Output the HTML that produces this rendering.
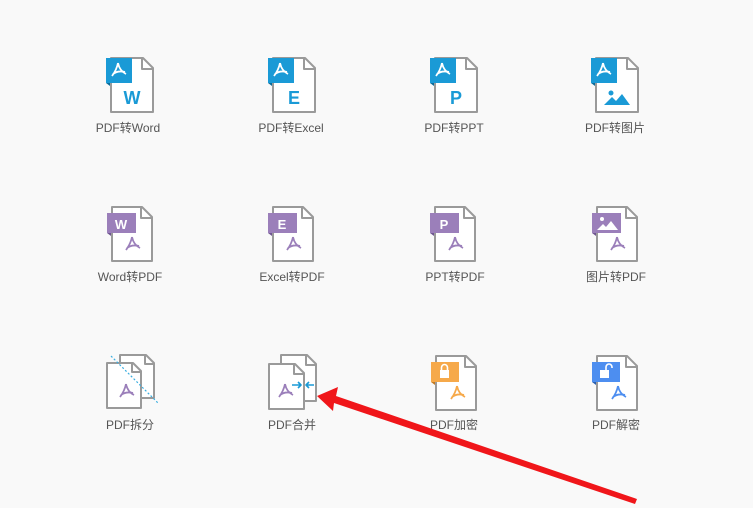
<!DOCTYPE html>
<html><head><meta charset="utf-8"><style>
html,body{margin:0;padding:0;background:#f9f9f9;width:753px;height:508px;overflow:hidden}
text{font-family:"Liberation Sans","Noto Sans CJK SC",sans-serif}
</style></head><body>
<svg width="753" height="508" viewBox="0 0 753 508" xmlns="http://www.w3.org/2000/svg">
<g stroke-linejoin="round">
<!-- Row 1 -->
<g transform="translate(111,58)">
 <path d="M0,0H32L42,10V54H0Z" fill="#fff" stroke="#9a9a9a" stroke-width="2"/><path d="M31,0V11H42" fill="none" stroke="#9a9a9a" stroke-width="2"/>
 <rect x="-5" y="0" width="26" height="25" fill="#1a9ad6"/><path d="M-5,25H-1V28Z" fill="#0b6a98"/>
 <path d="M7,5C6,10 4,14 1,18M7,5C8,10 11,14 15,16M2,16C6,13 10,13 14,14" fill="none" stroke="#fff" stroke-width="1.8"/>
 <text x="21" y="46" font-size="18" font-weight="bold" fill="#1a9ad6" text-anchor="middle">W</text>
</g>
<g transform="translate(273,58)">
 <path d="M0,0H32L42,10V54H0Z" fill="#fff" stroke="#9a9a9a" stroke-width="2"/><path d="M31,0V11H42" fill="none" stroke="#9a9a9a" stroke-width="2"/>
 <rect x="-5" y="0" width="26" height="25" fill="#1a9ad6"/><path d="M-5,25H-1V28Z" fill="#0b6a98"/>
 <path d="M7,5C6,10 4,14 1,18M7,5C8,10 11,14 15,16M2,16C6,13 10,13 14,14" fill="none" stroke="#fff" stroke-width="1.8"/>
 <text x="21" y="46" font-size="18" font-weight="bold" fill="#1a9ad6" text-anchor="middle">E</text>
</g>
<g transform="translate(435,58)">
 <path d="M0,0H32L42,10V54H0Z" fill="#fff" stroke="#9a9a9a" stroke-width="2"/><path d="M31,0V11H42" fill="none" stroke="#9a9a9a" stroke-width="2"/>
 <rect x="-5" y="0" width="26" height="25" fill="#1a9ad6"/><path d="M-5,25H-1V28Z" fill="#0b6a98"/>
 <path d="M7,5C6,10 4,14 1,18M7,5C8,10 11,14 15,16M2,16C6,13 10,13 14,14" fill="none" stroke="#fff" stroke-width="1.8"/>
 <text x="21" y="46" font-size="18" font-weight="bold" fill="#1a9ad6" text-anchor="middle">P</text>
</g>
<g transform="translate(596,58)">
 <path d="M0,0H32L42,10V54H0Z" fill="#fff" stroke="#9a9a9a" stroke-width="2"/><path d="M31,0V11H42" fill="none" stroke="#9a9a9a" stroke-width="2"/>
 <rect x="-5" y="0" width="26" height="25" fill="#1a9ad6"/><path d="M-5,25H-1V28Z" fill="#0b6a98"/>
 <path d="M7,5C6,10 4,14 1,18M7,5C8,10 11,14 15,16M2,16C6,13 10,13 14,14" fill="none" stroke="#fff" stroke-width="1.8"/>
 <circle cx="15" cy="35" r="2.5" fill="#1a9ad6"/><path d="M8,47L16,39L20,43L26,36L34,47Z" fill="#1a9ad6"/>
</g>
<!-- Row 2 -->
<g transform="translate(112,207)">
 <path d="M0,0H30L40,10V54H0Z" fill="#fff" stroke="#9a9a9a" stroke-width="2"/><path d="M29,0V11H40" fill="none" stroke="#9a9a9a" stroke-width="2"/>
 <rect x="-5" y="6" width="29" height="20" fill="#9b7fba"/><path d="M-5,26H-1V29Z" fill="#6e5590"/>
 <text x="9" y="22" font-size="13" font-weight="bold" fill="#fff" text-anchor="middle">W</text>
 <path d="M20,30C19,35 17,39 14,43M20,30C21,35 24,39 28,41M15,41C19,38 23,38 27,39" fill="none" stroke="#9b7fba" stroke-width="1.8"/>
</g>
<g transform="translate(273,207)">
 <path d="M0,0H30L40,10V54H0Z" fill="#fff" stroke="#9a9a9a" stroke-width="2"/><path d="M29,0V11H40" fill="none" stroke="#9a9a9a" stroke-width="2"/>
 <rect x="-5" y="6" width="29" height="20" fill="#9b7fba"/><path d="M-5,26H-1V29Z" fill="#6e5590"/>
 <text x="9" y="22" font-size="13" font-weight="bold" fill="#fff" text-anchor="middle">E</text>
 <path d="M20,30C19,35 17,39 14,43M20,30C21,35 24,39 28,41M15,41C19,38 23,38 27,39" fill="none" stroke="#9b7fba" stroke-width="1.8"/>
</g>
<g transform="translate(435,207)">
 <path d="M0,0H30L40,10V54H0Z" fill="#fff" stroke="#9a9a9a" stroke-width="2"/><path d="M29,0V11H40" fill="none" stroke="#9a9a9a" stroke-width="2"/>
 <rect x="-5" y="6" width="29" height="20" fill="#9b7fba"/><path d="M-5,26H-1V29Z" fill="#6e5590"/>
 <text x="9" y="22" font-size="13" font-weight="bold" fill="#fff" text-anchor="middle">P</text>
 <path d="M20,30C19,35 17,39 14,43M20,30C21,35 24,39 28,41M15,41C19,38 23,38 27,39" fill="none" stroke="#9b7fba" stroke-width="1.8"/>
</g>
<g transform="translate(597,207)">
 <path d="M0,0H30L40,10V54H0Z" fill="#fff" stroke="#9a9a9a" stroke-width="2"/><path d="M29,0V11H40" fill="none" stroke="#9a9a9a" stroke-width="2"/>
 <rect x="-5" y="6" width="29" height="20" fill="#9b7fba"/><path d="M-5,26H-1V29Z" fill="#6e5590"/>
 <circle cx="5" cy="12" r="2" fill="#fff"/><path d="M0,23L6,17L9,20L14,14L21,23Z" fill="#fff"/>
 <path d="M20,30C19,35 17,39 14,43M20,30C21,35 24,39 28,41M15,41C19,38 23,38 27,39" fill="none" stroke="#9b7fba" stroke-width="1.8"/>
</g>
<!-- Row 3 -->
<g>
 <path d="M120,355H146L154,363V398H120Z" fill="#fff" stroke="#9a9a9a" stroke-width="2"/><path d="M145,355V364H154" fill="none" stroke="#9a9a9a" stroke-width="2"/>
 <path d="M107,363H133L141,371V408H107Z" fill="#fff" stroke="#9a9a9a" stroke-width="2"/><path d="M132,363V372H141" fill="none" stroke="#9a9a9a" stroke-width="2"/>
 <line x1="111" y1="356" x2="158" y2="403" stroke="#3aaee0" stroke-width="1.2" stroke-dasharray="2,2"/>
 <path d="M126,384C125,389 123,393 120,397M126,384C127,389 130,393 134,395M121,395C125,392 129,392 133,393" fill="none" stroke="#9b7fba" stroke-width="1.8"/>
</g>
<g>
 <path d="M281,355H307L316,364V401H281Z" fill="#fff" stroke="#9a9a9a" stroke-width="2"/><path d="M306,355V365H316" fill="none" stroke="#9a9a9a" stroke-width="2"/>
 <path d="M269,364H295L304,373V409H269Z" fill="#fff" stroke="#9a9a9a" stroke-width="2"/><path d="M294,364V374H304" fill="none" stroke="#9a9a9a" stroke-width="2"/>
 <path d="M285,384C284,389 282,393 279,397M285,384C286,389 289,393 293,395M280,395C284,392 288,392 292,393" fill="none" stroke="#9b7fba" stroke-width="1.8"/>
 <path d="M292,385H301M298,382L301,385L298,388M314,385H306M309,382L306,385L309,388" fill="none" stroke="#1a9ad6" stroke-width="1.6"/>
</g>
<g transform="translate(436,356)">
 <path d="M0,0H30L40,10V54H0Z" fill="#fff" stroke="#9a9a9a" stroke-width="2"/><path d="M29,0V11H40" fill="none" stroke="#9a9a9a" stroke-width="2"/>
 <rect x="-5" y="6" width="28" height="20" fill="#f6a94a"/><path d="M-5,26H-1V29Z" fill="#c27a22"/>
 <rect x="4" y="14" width="9" height="8" fill="#fff"/><path d="M5.5,14V11.5A3,3 0 0 1 11.5,11.5V14" fill="none" stroke="#fff" stroke-width="1.6"/>
 <path d="M21,30C20,35 18,39 15,43M21,30C22,35 25,39 29,41M16,41C20,38 24,38 28,39" fill="none" stroke="#f6a94a" stroke-width="1.8"/>
</g>
<g transform="translate(597,356)">
 <path d="M0,0H30L40,10V54H0Z" fill="#fff" stroke="#9a9a9a" stroke-width="2"/><path d="M29,0V11H40" fill="none" stroke="#9a9a9a" stroke-width="2"/>
 <rect x="-5" y="6" width="28" height="20" fill="#4d8ef0"/><path d="M-5,26H-1V29Z" fill="#2a5fb0"/>
 <rect x="3" y="14" width="9" height="8" fill="#fff"/><path d="M9,14V11A3,3 0 0 1 15,11V12" fill="none" stroke="#fff" stroke-width="1.6"/>
 <path d="M21,30C20,35 18,39 15,43M21,30C22,35 25,39 29,41M16,41C20,38 24,38 28,39" fill="none" stroke="#4d8ef0" stroke-width="1.8"/>
</g>
</g>
<g font-size="12" fill="#555" text-anchor="middle">
<text x="128" y="132">PDF转Word</text>
<text x="291" y="132">PDF转Excel</text>
<text x="454" y="132">PDF转PPT</text>
<text x="615" y="132">PDF转图片</text>
<text x="130" y="281">Word转PDF</text>
<text x="292" y="281">Excel转PDF</text>
<text x="455" y="281">PPT转PDF</text>
<text x="616" y="281">图片转PDF</text>
<text x="130" y="429">PDF拆分</text>
<text x="292" y="429">PDF合并</text>
<text x="454" y="429">PDF加密</text>
<text x="616" y="429">PDF解密</text>
</g>
<!-- red arrow -->
<path d="M317,396L338,387L336,396L637,499L635,504L334,403L333,411Z" fill="#f0161a"/>
</svg>
</body></html>
